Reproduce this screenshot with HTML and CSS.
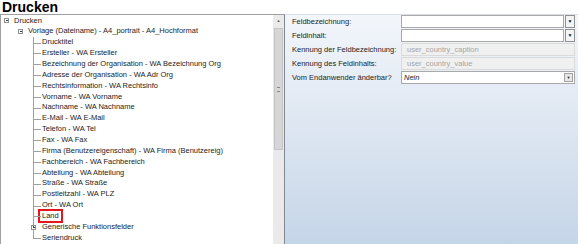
FILE: index.html
```html
<!DOCTYPE html>
<html lang="de">
<head>
    <meta charset="UTF-8">
    <title>Drucken</title>
    <link rel="stylesheet" href="styles.css">
</head>
<body>

    <h1 class="title">Drucken</h1>

    <div class="main">
        <!-- Tree with templates and fields -->
        <div class="tree-panel">
            <div class="tree">
                <ul class="level0">
                    <li>
                        <div class="node"><span class="exp minus"></span>Drucken</div>
                        <ul class="level1">
                            <li>
                                <div class="node"><span class="exp minus"></span>Vorlage (Dateiname) - A4_portrait - A4_Hochformat</div>
                                <ul class="level2">
                                    <li><div class="node">Drucktitel</div></li>
                                    <li><div class="node">Ersteller - WA Ersteller</div></li>
                                    <li><div class="node">Bezeichnung der Organisation - WA Bezeichnung Org</div></li>
                                    <li><div class="node">Adresse der Organisation - WA Adr Org</div></li>
                                    <li><div class="node">Rechtsinformation - WA Rechtsinfo</div></li>
                                    <li><div class="node">Vorname - WA Vorname</div></li>
                                    <li><div class="node">Nachname - WA Nachname</div></li>
                                    <li><div class="node">E-Mail - WA E-Mail</div></li>
                                    <li><div class="node">Telefon - WA Tel</div></li>
                                    <li><div class="node">Fax - WA Fax</div></li>
                                    <li><div class="node">Firma (Benutzereigenschaft) - WA Firma (Benutzereig)</div></li>
                                    <li><div class="node">Fachbereich - WA Fachbereich</div></li>
                                    <li><div class="node">Abteilung - WA Abteilung</div></li>
                                    <li><div class="node">Straße - WA Straße</div></li>
                                    <li><div class="node">Postleitzahl - WA PLZ</div></li>
                                    <li><div class="node">Ort - WA Ort</div></li>
                                    <li><div class="node"><span class="marked">Land</span></div></li>
                                    <li class="folder"><div class="node"><span class="exp plus"></span>Generische Funktionsfelder</div></li>
                                    <li><div class="node">Seriendruck</div></li>
                                </ul>
                            </li>
                        </ul>
                    </li>
                </ul>
            </div>
            <div class="scrollbar">
                <div class="arrow">&#9650;</div>
                <div class="thumb"><span class="grip"></span></div>
            </div>
        </div>

        <!-- Field properties -->
        <div class="props">
            <div class="form">
                <label>Feldbezeichnung:</label>
                <div class="field"><span class="box"></span><span class="btn">&#9660;</span></div>

                <label>Feldinhalt:</label>
                <div class="field"><span class="box"></span><span class="btn">&#9660;</span></div>

                <label>Kennung der Feldbezeichnung:</label>
                <div class="field"><span class="box readonly">user_country_caption</span></div>

                <label>Kennung des Feldinhalts:</label>
                <div class="field"><span class="box readonly">user_country_value</span></div>

                <label>Vom Endanwender änderbar?</label>
                <div class="field"><span class="box select"><i>Nein</i><span class="drop">&#9660;</span></span></div>
            </div>
        </div>
    </div>

</body>
</html>
```

FILE: styles.css
```css
/* Basic Reset */
body {
    margin: 0;
    padding: 0;
    font-family: "Liberation Sans", Arial, sans-serif;
    font-size: 7.5px;
    color: #1c1c24;
    background-color: #ffffff;
    height: 244px;
    overflow: hidden;
}

.title {
    margin: 0;
    padding-left: 2px;
    font-size: 14px;
    line-height: 14px;
    height: 14px;
    font-weight: bold;
    color: #000000;
}

.main {
    display: flex;
    height: 230px;
}

/* Tree Panel */
.tree-panel {
    width: 283px;
    display: flex;
    border-top: 1px solid #a0a0a0;
    border-left: 1px solid #a0a0a0;
    border-right: 1px solid #828790;
}

.tree {
    flex: 1;
    padding-top: 0.5px;
    overflow: hidden;
}

.tree ul {
    list-style: none;
    margin: 0;
    padding: 0;
}

.node {
    height: 10.87px;
    line-height: 10.87px;
    white-space: nowrap;
    display: flex;
    align-items: center;
}

.level0 > li > .node {
    padding-left: 3px;
}

.level1 {
    padding-left: 17px !important;
}

.level2 {
    margin-left: 15px !important;
}

.level2 > li {
    position: relative;
    padding-left: 9px;
}

/* connector lines */
.level2 > li::before {
    content: '';
    position: absolute;
    left: 0;
    top: 0;
    width: 7px;
    height: 5.4px;
    border-left: 1px solid #a0a0a0;
    border-bottom: 1px solid #a0a0a0;
}

.level2 > li::after {
    content: '';
    position: absolute;
    left: 0;
    top: 5.4px;
    bottom: 0;
    border-left: 1px solid #a0a0a0;
}

.level2 > li:last-child::after {
    display: none;
}

.level2 > li.folder::before {
    border-bottom: none;
}

.level2 > li.folder .exp {
    margin-left: -11px;
    margin-right: 6px;
    background-color: #ffffff;
    position: relative;
    z-index: 1;
}

.exp {
    width: 5px;
    height: 5px;
    border: 1px solid #8e8f8f;
    margin-right: 5px;
    position: relative;
    box-sizing: border-box;
    flex-shrink: 0;
}

.exp::before {
    content: '';
    position: absolute;
    left: 0.5px;
    right: 0.5px;
    top: 1px;
    height: 1px;
    background-color: #3c3c3c;
}

.exp.plus::after {
    content: '';
    position: absolute;
    top: 0.5px;
    bottom: 0.5px;
    left: 1px;
    width: 1px;
    background-color: #3c3c3c;
}

.marked {
    border: 2px solid #e8161b;
    padding: 1px 2px;
    margin-left: -4px;
    line-height: 8px;
}

/* Scrollbar */
.scrollbar {
    width: 11px;
    background-color: #eaeaea;
    display: flex;
    flex-direction: column;
    align-items: center;
}

.arrow {
    height: 12px;
    font-size: 4px;
    line-height: 12px;
    color: #555555;
}

.thumb {
    width: 9px;
    height: 122px;
    margin-top: 1px;
    background-color: #d6d6d6;
    border: 1px solid #c4c4c4;
    box-sizing: border-box;
    display: flex;
    align-items: center;
    justify-content: center;
}

.grip {
    width: 3px;
    height: 3px;
    border-top: 1px solid #888888;
    border-bottom: 1px solid #888888;
}

/* Properties Panel */
.props {
    flex: 1;
    border-top: 1px solid #d8dde6;
    background: linear-gradient(to bottom, #f3f6fb 0%, #dde6f1 50%, #c5d5e8 100%);
    padding: 0 3px 0 7px;
}

.form {
    display: grid;
    grid-template-columns: 109px 1fr;
    row-gap: 1px;
    align-items: center;
}

.form label {
    color: #1c1c24;
    white-space: nowrap;
}

.field {
    display: flex;
    height: 13px;
}

.box {
    flex: 1;
    background-color: #ffffff;
    border: 1px solid #a9a9a9;
    box-sizing: border-box;
    padding-left: 5px;
    line-height: 11px;
}

.box.readonly {
    background-color: #f0f0f0;
    color: #a6a6a6;
    border-color: #dadada;
}

.box.select {
    display: flex;
    justify-content: space-between;
    align-items: center;
    padding-left: 2px;
    padding-right: 1px;
}

.btn {
    width: 10px;
    margin-left: 1px;
    border: 1px solid #8e8f8f;
    background-color: #f4f4f4;
    box-sizing: border-box;
    font-size: 5px;
    line-height: 11px;
    text-align: center;
    color: #202020;
}

.drop {
    width: 9px;
    height: 9px;
    border: 1px solid #a0a0a0;
    background-color: #e8e8e8;
    box-sizing: border-box;
    font-size: 4px;
    line-height: 7px;
    text-align: center;
}
```
